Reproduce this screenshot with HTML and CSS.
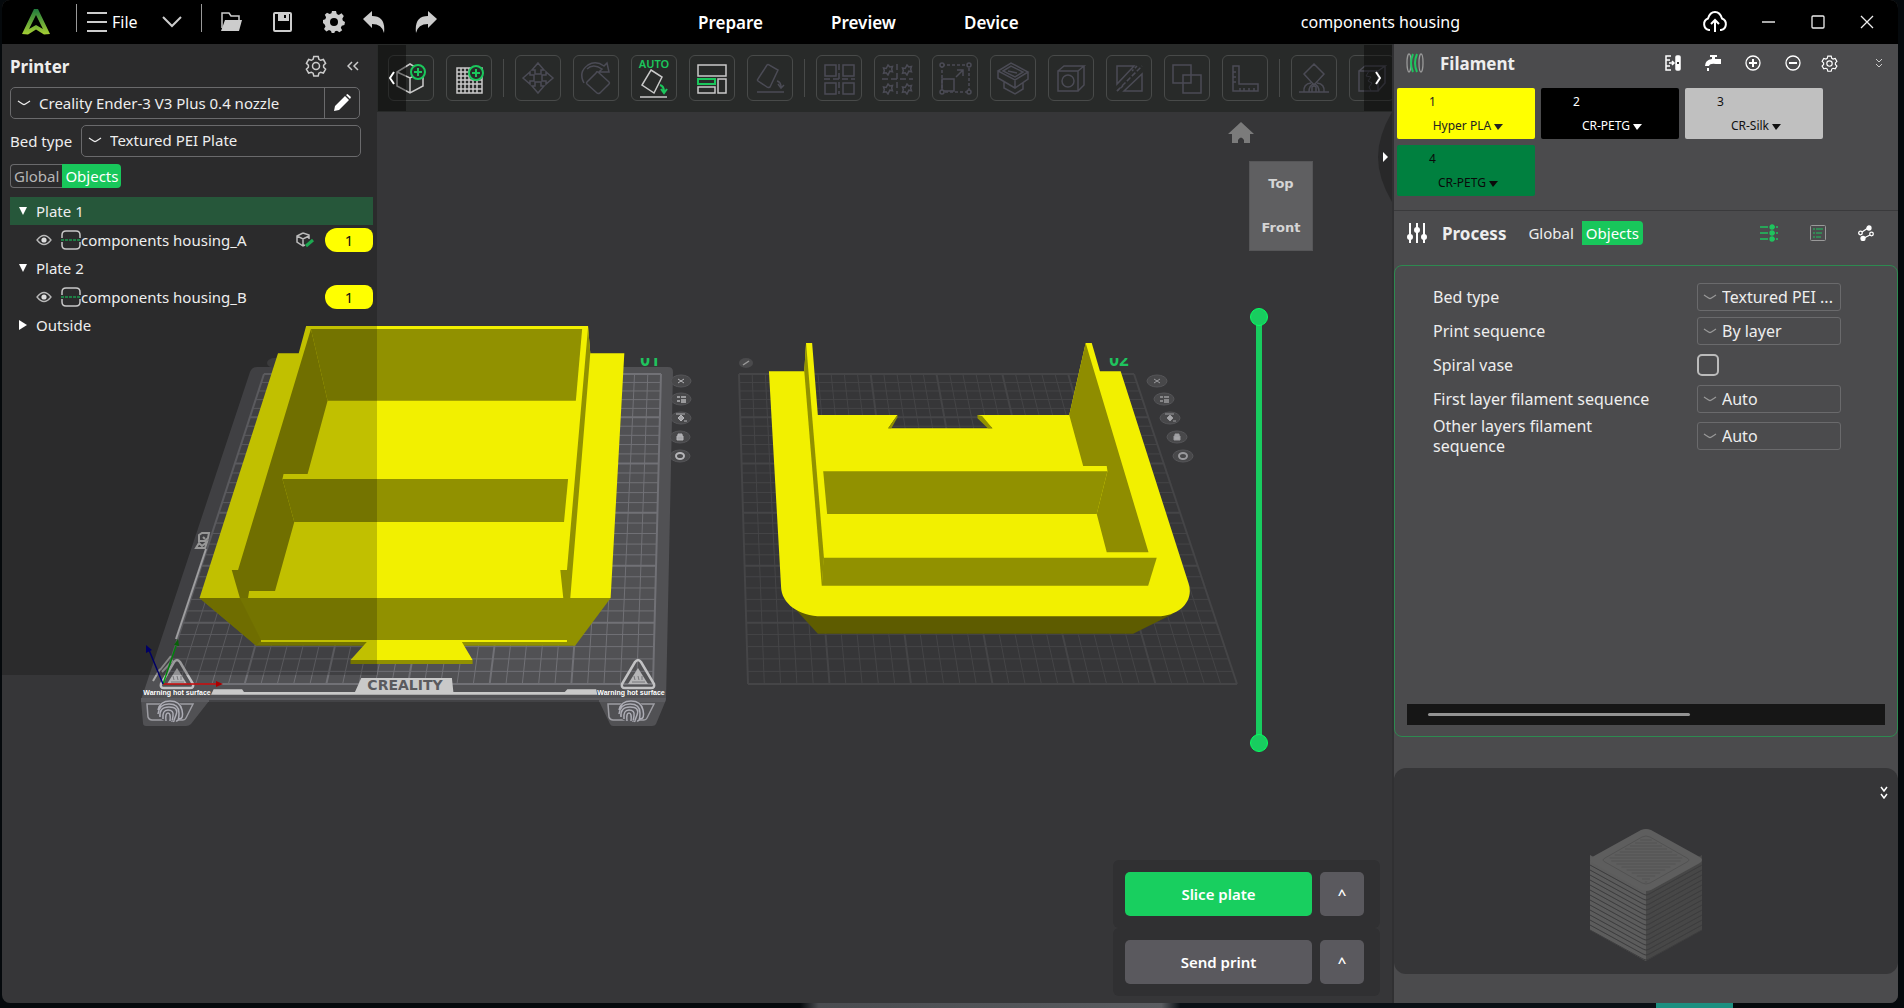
FILE: index.html
```html
<!DOCTYPE html>
<html lang="en">
<head>
    <meta charset="utf-8">
    <title>components housing</title>
    <meta name="viewport" content="width=device-width, initial-scale=1.0">
    <link rel="stylesheet" href="styles.css">
</head>
<body>

<svg class="defs" width="0" height="0">
    <symbol id="gear" viewBox="0 0 22 22">
        <path d="M8.8 1.5h4.4l.7 2.8 1.7 1 2.8-.8 2.2 3.8-2 2v1.9l2 2-2.2 3.8-2.8-.8-1.7 1-.7 2.8H8.8l-.7-2.8-1.7-1-2.8.8-2.2-3.8 2-2v-1.9l-2-2 2.2-3.8 2.8.8 1.7-1z"/>
        <circle cx="11" cy="11" r="3.5"/>
    </symbol>
    <symbol id="down" viewBox="0 0 14 8"><path d="M1 2q5 3.500 6 3.500t6-3.500" fill="none" stroke="currentColor" stroke-width="1.3"/></symbol>
    <symbol id="eye" viewBox="0 0 16 12">
        <path d="M1 6q7-9 14 0q-7 9-14 0z" fill="none" stroke="#b8b8b8" stroke-width="1.3"/><circle cx="8" cy="6" r="2.6" fill="#ddd"/>
    </symbol>
    <symbol id="part" viewBox="0 0 20 20">
        <path d="M1 8V5q0-4 4-4h10q4 0 4 4v3M1 12v3q0 4 4 4h10q4 0 4-4v-3" fill="none" stroke="#c8c8c8" stroke-width="1.5"/>
        <path d="M0 10h20" stroke="#1d9a4e" stroke-width="1.5" stroke-dasharray="3 1"/>
    </symbol>
    <symbol id="minigear" viewBox="-6 -6 12 12"><path d="M0-5l1.800 2 2.700-.5-.8 2.600.8 2.600-2.700-.5L0 5l-1.800-2.300-2.700.5.8-2.600-.8-2.600 2.700.5z"/></symbol>
</svg>

<div class="window">

    <header class="titlebar">
        <div class="tools">
            <svg class="logo" width="28" height="26" viewBox="0 0 28 26">
                <defs><linearGradient id="lg" x1="0" y1="0" x2="0" y2="1"><stop offset="0" stop-color="#1f7a3c"/><stop offset="1" stop-color="#a5cf34"/></linearGradient></defs>
                <path d="M12 0h4l12 25-6 .5-8-5-8 5L0 25zm2 6L7 20l7-4 7 4z" fill="url(#lg)" fill-rule="evenodd"/>
            </svg>
            <span class="bar"></span>
            <button class="file">
                <svg width="22" height="22" viewBox="0 0 22 22" stroke="#ccc" stroke-width="2"><path d="M1 2h20M1 11h20M1 20h20"/></svg>
                File
            </button>
            <button class="drop" aria-label="More"><svg width="20" height="12" viewBox="0 0 20 12" fill="none" stroke="#ccc" stroke-width="2"><path d="M1 1l9 9 9-9"/></svg></button>
            <span class="bar"></span>
            <button aria-label="Open"><svg width="22" height="20" viewBox="0 0 22 20"><path d="M1 16V1h7l2 3h8v4" fill="none" stroke="#ccc" stroke-width="1.5"/><path d="M4 8h17l-3 11H0z" fill="#ccc"/></svg></button>
            <button aria-label="Save"><svg width="20" height="20" viewBox="0 0 20 20"><rect x="1" y="1" width="17" height="18" rx="1" fill="none" stroke="#ccc" stroke-width="2"/><path d="M5 1h11v8H5z" fill="#ccc"/><path d="M12 3v3" stroke="#000" stroke-width="2"/></svg></button>
            <button class="set" aria-label="Settings"><svg width="22" height="22" viewBox="0 0 22 22"><path d="M9 0h4l.8 3 2 .9 2.700-1.600 2.300 2.800-1.500 2.600.6 2L22 11l-.6 3-2.600.7-1 2 1.400 2.500-2.800 2-2.400-1.500-2 .6-.8 2H8.800l-.8-2.400-2-.8L3.400 20.500 1 18l1.500-2.600-.8-2L0 12V9l2.300-.8.8-2L1.800 3.800 4 1.700l2.600 1.400 1.800-.8z" fill="#ccc"/><circle cx="11" cy="11" r="4" fill="#000"/></svg></button>
            <button aria-label="Undo"><svg width="22" height="22" viewBox="0 0 22 22"><path d="M0 8L9 0v5q14 0 12 17q-2-9-12-9v4z" fill="#ccc"/></svg></button>
            <button class="redo" aria-label="Redo"><svg width="22" height="22" viewBox="0 0 22 22"><path d="M22 8L13 0v5q-14 0-12 17q2-9 12-9v4z" fill="#ccc"/></svg></button>
        </div>
        <nav class="tabs">
            <a href="#prepare">Prepare</a>
            <a href="#preview">Preview</a>
            <a href="#device">Device</a>
        </nav>
        <h1 class="project">components housing</h1>
        <div class="controls">
            <button class="cloud" aria-label="Upload"><svg width="26" height="22" viewBox="0 0 26 22" fill="none" stroke="#fff" stroke-width="2"><path d="M8 19H7a6 6 0 0 1-1-11.500Q8 1 13 1t7 6.500A6 6 0 0 1 19 19h-1M13 21V10M9 13l4-4 4 4"/></svg></button>
            <button aria-label="Minimize"><svg width="14" height="14" viewBox="0 0 14 14"><path d="M0 7h13" stroke="#aaa" stroke-width="2"/></svg></button>
            <button aria-label="Maximize"><svg width="14" height="14" viewBox="0 0 14 14"><rect x="1" y="1" width="12" height="12" rx="1" fill="none" stroke="#eee" stroke-width="1.3"/></svg></button>
            <button aria-label="Close"><svg width="14" height="14" viewBox="0 0 14 14"><path d="M1 1l12 12M13 1L1 13" stroke="#eee" stroke-width="1.3"/></svg></button>
        </div>
    </header>

    <div class="main">
        <section class="workspace">

            <svg class="scene" viewBox="2 44 1391 959" preserveAspectRatio="xMinYMin slice">
                <defs>
                    <clipPath id="numClip"><rect x="600" y="358" width="600" height="12"/></clipPath>
                    <g id="warn">
                        <path d="M0-23q3-4 6 0l13 22q1 4-3 4H-10q-4 0-3-4z" fill="none" stroke="#c2c2c4" stroke-width="2.5"/>
                        <path d="M3-17L13-1H-7z" fill="#b5b5b7"/>
                        <path d="M-1-9l1 4M3-9l1 4M7-9l0 4M-3-3h13" stroke="#77777a"/>
                    </g>
                    <g id="finger" fill="none" stroke="#9d9da3">
                        <path d="M-23-7h46l-7 14q-1 2-3 2h-31q-3 0-4-3z" stroke-width="1.5"/>
                        <ellipse rx="13" ry="11" fill="#55555a" stroke="none"/>
                        <g stroke="#adadb5" stroke-width="1.5"><path d="M-12-1q2-9 12-9t12 9-3 9M-12 3q1-10 11-10t10 9-3 8M-10 6q-1-10 9-10t7 8-2 6M-7 8q-1-9 5-9t5 6-1 5M-4 10q-1-8 2-8t2 8"/></g>
                    </g>
                </defs>

                <!-- bed 1 -->
                <path d="M257 367H668q5 0 5 5L666 700 656 724q-1 2-4 2H613q-2 0-3-2L599 701H209L191 724q-2 2-5 2H146q-3 0-3-3L141 700 250 372q2-5 7-5z" fill="#515154"/>
                <path d="M141 698H666L665 702H141z" fill="#5c5c60"/>
                <path d="M209 701H599" stroke="#2a2a2c"/>
                <g id="grid1" fill="none" stroke="#717176"></g>
                <path d="M206 549L176 639" stroke="#c6c6c8" stroke-width="2"/>
                <path d="M199 535l3-2h7l-1 5-3 3h-6zM203 537l2 2M196 548l3-5 3 3 5-4-2 6z" fill="none" stroke="#bdbdbd" stroke-width="2"/>
                <g transform="translate(130 310) scale(.37 .3333)">
                    <path d="M219 1154l7-16h77l5 8h300l17-42h245l4 42h301l7-8h78l3 16z" fill="#c9c9c9"/>
                </g>
                <text class="brand" x="405" y="690">CREALITY</text>
                <use href="#warn" x="174" y="685"/>
                <use href="#warn" x="635" y="685"/>
                <path d="M160 670l11-14M162 672l11-12M153 681l7-12" stroke="#a9a9a9" stroke-width="2"/>
                <text class="warntext" x="177" y="695">Warning hot surface</text>
                <text class="warntext" x="631" y="695">Warning hot surface</text>
                <use href="#finger" x="170" y="711"/>
                <use href="#finger" x="631" y="711"/>

                <ellipse cx="275" cy="363" rx="8" ry="5" fill="#4a4a4c"/>
                <g class="platenum" clip-path="url(#numClip)">
                    <text x="650" y="366">01</text>
                    <text x="1119" y="366">02</text>
                </g>

                <!-- housing A -->
                <g transform="translate(130 310) scale(.37 .3333)">
                    <path fill="#f2f000" d="M400 130H456L476 48H1238L1244 130H1336L1299 864H188z"/>
                    <path fill="#919100" d="M188 864H1299L1203 1007H341z"/>
                    <path fill="#8b8900" d="M188 864H297L354 990 341 1007z"/>
                    <path fill="#919100" d="M489 57H1222L1205 272H534z"/>
                    <path fill="#8d8b00" d="M489 57L534 272 480 492H415L412 507 444 636 392 843H322L319 864H297L275 780H292z"/>
                    <path fill="#919100" d="M412 507H1184L1173 636H444z"/>
                    <path fill="#919100" d="M1238 52L1244 130 1190 864H1171L1163 780H1181z"/>
                    <path fill="#f2f000" d="M354 990H1181V996H354zM640 996H897L926 1050H596z"/>
                    <path fill="#919100" d="M596 1050H926V1062H596z"/>
                </g>

                <!-- axes -->
                <path d="M163 684h56" stroke="#c40000" stroke-width="1.5"/><path d="M216 681l7 3-7 3z" fill="#a00"/>
                <path d="M163 684l13-38" stroke="#00a010" stroke-width="1.5"/><path d="M174 645l4-6 1 7z" fill="#0a7a0a"/>
                <path d="M163 684l-14-34" stroke="#000080" stroke-width="1.5"/><path d="M146 653l0-8 6 5z" fill="#000080"/>

                <!-- bed 2 -->
                <g id="grid2" fill="none" stroke="#454547"></g>
                <ellipse cx="746" cy="363" rx="7" ry="5" fill="#4a4a4c"/><path d="M743 365l6-4" stroke="#999" stroke-width="1.5"/>

                <!-- housing B -->
                <g transform="translate(720 310) scale(.3571 .3333)">
                    <path fill="#5e5c00" d="M205 890L274 971H1157L1268 912z"/>
                    <path fill="#f2f000" d="M137 184H236L241 99H258L274 315H497L471 355H763L721 315H978L1024 99H1041L1064 184H1122L1312 820C1328 870 1290 918 1225 919H285C220 918 172 880 171 830z"/>
                    <path fill="#919100" d="M497 315L497 322 480 355H471zM721 315L734 318 763 355H750L721 325z"/>
                    <path fill="#919100" d="M241 99L291 743 285 827 236 184z"/>
                    <path fill="#8f8d00" d="M1024 99L1200 727H1083L1055 612 1085 484 1083 468H1017L978 315z"/>
                    <path fill="#919100" d="M289 484H1085L1055 612H300z"/>
                    <path fill="#919100" d="M290 743H1223L1199 827H285z"/>
                </g>

                <g id="plateIcons"></g>
            </svg>

            <div class="toolbar">
                <button class="scroll left" aria-label="Scroll left"><svg width="6" height="14" viewBox="0 0 6 14" fill="none" stroke="#fff" stroke-width="2"><path d="M5 1L1 7l4 6"/></svg></button>
                <button class="tool on" aria-label="Add model"><svg viewBox="0 0 46 46"><path d="M22 9l13 8v14l-13 7-13-7V17zM9 17l13 6 6-3M22 23v15"/><circle class="g solid" cx="30" cy="17" r="7"/><path class="g" d="M26 17h8M30 13v8"/></svg></button>
                <button class="tool on" aria-label="Add plate"><svg viewBox="0 0 46 46"><path d="M11 13h25v25H11zM15 13v25M19 13v25M23 13v25M27 13v25M31 13v25M11 17h25M11 21h25M11 25h25M11 29h25M11 34h25"/><circle class="g solid" cx="30" cy="18" r="7"/><path class="g" d="M26 18h8M30 14v8"/></svg></button>
                <span class="sep"></span>
                <button class="tool" disabled aria-label="Move"><svg viewBox="0 0 46 46"><path d="M23 8l6 7h-3v4h-6v-4h-3zM23 38l6-7h-3v-4h-6v4h-3zM8 23l7-6v3h4v6h-4v3zM38 23l-7-6v3h-4v6h4v3z"/></svg></button>
                <button class="tool" disabled aria-label="Rotate"><svg viewBox="0 0 46 46"><path d="M25 17l11 10q1 1 0 2l-9 9q-2 1-3 0l-10-9q-1-1 0-2l9-9q1-2 2-1zM11 28Q5 17 15 10q8-5 16 1l3-3 2 9H26l3-3Q20 8 14 14"/></svg></button>
                <button class="tool on" aria-label="Auto orient"><svg viewBox="0 0 46 46"><text class="auto" x="23" y="13">AUTO</text><path d="M20 15l11 7-8 16-12-8zM9 42h27"/><path class="g" d="M29 30q4 1 4 7M30 34l3 4 3-4"/></svg></button>
                <button class="tool on" aria-label="Arrange"><svg viewBox="0 0 46 46"><path d="M9 10h28v11H9zM29 24h8v14h-8zM9 32h17v6H9z"/><path class="g" d="M9 24h17v5H9z"/></svg></button>
                <button class="tool" disabled aria-label="Lay on face"><svg viewBox="0 0 46 46"><path d="M20 10q1-1 2 0l9 5-8 17q-2 1-3 0l-9-6q-1-1 0-2zM10 37h27M30 26q4 1 4 6M31 29l3 4 3-3"/></svg></button>
                <span class="sep"></span>
                <button class="tool" disabled aria-label="Split to objects"><svg viewBox="0 0 46 46"><path d="M9 10h11v11H9zM27 10h11v11H27zM9 28h11v11H9zM27 28h11v11H27z"/><path stroke-dasharray="6 3" d="M23 9v30M8 24h31"/></svg></button>
                <button class="tool" disabled aria-label="Split to parts"><svg viewBox="0 0 46 46"><use href="#minigear" x="8" y="9" width="12" height="12"/><use href="#minigear" x="27" y="9" width="12" height="12"/><use href="#minigear" x="8" y="28" width="12" height="12"/><use href="#minigear" x="27" y="28" width="12" height="12"/><path stroke-dasharray="6 3" d="M23 9v30M8 24h31"/></svg></button>
                <button class="tool" disabled aria-label="Scale"><svg viewBox="0 0 46 46"><path d="M10 24h12v12H10zM24 22l7-7M25 15h6v6"/><path stroke-dasharray="3 2" d="M10 10h27v27H10z"/><g><circle class="solid" cx="10" cy="10" r="2"/><circle class="solid" cx="37" cy="10" r="2"/><circle class="solid" cx="10" cy="37" r="2"/><circle class="solid" cx="37" cy="37" r="2"/></g></svg></button>
                <button class="tool" disabled aria-label="Hollow"><svg viewBox="0 0 46 46"><path d="M8 16l13-8 17 9-13 8zM8 16v7l17 10 13-9v-7M25 25v8M14 27v6l11 6 8-5v-6M13 16l8-5 12 6-8 5zM18 16l9 2"/></svg></button>
                <button class="tool" disabled aria-label="Hole"><svg viewBox="0 0 46 46"><path d="M10 16h20v20H10zM10 16l6-5h20l-6 5M36 11v19l-6 6"/><circle cx="20" cy="26" r="6"/></svg></button>
                <button class="tool" disabled aria-label="Cut"><svg viewBox="0 0 46 46"><path d="M11 11h17L11 29zM36 19v17H18z"/><path stroke-dasharray="5 2" d="M11 36l25-25"/><path stroke-dasharray="3 2" d="M31 11l-5 5M17 31l-6 5"/></svg></button>
                <button class="tool" disabled aria-label="Boolean"><svg viewBox="0 0 46 46"><path d="M9 10h18v18H9zM19 20h18v18H19z"/></svg></button>
                <button class="tool" disabled aria-label="Measure"><svg viewBox="0 0 46 46"><path d="M11 11h6v18h19v7H11zM11 17h3M11 22h3M11 27h3M18 36v-3M22 36v-3M27 36v-3M32 36v-3"/></svg></button>
                <span class="sep"></span>
                <button class="tool" disabled aria-label="Supports"><svg viewBox="0 0 46 46"><path d="M23 9l10 10-10 11-10-11zM8 37h30M13 37q-1-8 7-9M33 37q1-8-7-9M18 37q0-7 5-8 5 1 5 8M21 37v-5q2-2 4 0v5"/></svg></button>
                <button class="tool" disabled aria-label="Seam"><svg viewBox="0 0 46 46"><path d="M10 16h19v20H10zM10 16l6-5h20l-7 5M36 11v17l-7 8"/><path d="M20 16l-3 5 5 1-3 4 4 2-3 4 2 4" stroke-width="1"/></svg></button>
                <button class="scroll right" aria-label="Scroll right"><svg width="6" height="14" viewBox="0 0 6 14" fill="none" stroke="#fff" stroke-width="2"><path d="M1 1l4 6-4 6"/></svg></button>
            </div>

            <aside class="printer">
                <div class="head">
                    <h2>Printer</h2>
                    <button class="cog" aria-label="Printer settings"><svg width="22" height="22" fill="none" stroke="#ccc" stroke-width="1.5"><use href="#gear"/></svg></button>
                    <button aria-label="Collapse"><svg width="12" height="10" viewBox="0 0 12 10" fill="none" stroke="#ccc" stroke-width="1.5"><path d="M5 1L1 5l4 4M11 1L7 5l4 4"/></svg></button>
                </div>
                <div class="field device">
                    <svg width="14" height="8"><use href="#down"/></svg>
                    <select aria-label="Printer"><option>Creality Ender-3 V3 Plus 0.4 nozzle</option></select>
                    <button class="edit" aria-label="Edit printer"><svg width="18" height="18" viewBox="0 0 18 18"><path d="M1 17l1-5L12 2l4 4L6 16zM13 1l1.500-1L18 3l-1 2z" fill="#fff"/></svg></button>
                </div>
                <div class="bedrow">
                    <label for="bed">Bed type</label>
                    <div class="field">
                        <svg width="14" height="8"><use href="#down"/></svg>
                        <select id="bed"><option>Textured PEI Plate</option></select>
                    </div>
                </div>
                <div class="switch framed">
                    <button>Global</button><button class="active">Objects</button>
                </div>
                <ul class="tree">
                    <li class="plate selected"><svg width="8" height="8"><path d="M0 0h8L4 8z" fill="#fff"/></svg>Plate 1</li>
                    <li class="object">
                        <svg width="16" height="12"><use href="#eye"/></svg><svg width="20" height="20"><use href="#part"/></svg><span>components housing_A</span>
                        <svg class="paint" width="20" height="16" viewBox="0 0 20 16" fill="none" stroke="#bbb" stroke-width="1.5"><path d="M7 1l6 2v4M7 1L1 4v6l6 4 2-1M1 4l6 3 6-3M7 7v6"/><path d="M10 14l7-6" stroke="#1da851" stroke-width="3"/></svg>
                        <b class="slot">1</b>
                    </li>
                    <li class="plate"><svg width="8" height="8"><path d="M0 0h8L4 8z" fill="#fff"/></svg>Plate 2</li>
                    <li class="object">
                        <svg width="16" height="12"><use href="#eye"/></svg><svg width="20" height="20"><use href="#part"/></svg><span>components housing_B</span>
                        <b class="slot">1</b>
                    </li>
                    <li class="plate"><svg width="8" height="10"><path d="M0 0l8 5-8 5z" fill="#fff"/></svg>Outside</li>
                </ul>
            </aside>

            <button class="home" aria-label="Home view"><svg width="26" height="22" viewBox="0 0 26 22"><path d="M13 0l13 12h-4v9h-6v-3q-3-5-6 0v3H4v-9H0z" fill="#7b7b7b"/></svg></button>
            <div class="viewcube">
                <span>Top</span>
                <span>Front</span>
            </div>
            <div class="layers">
                <input type="range" aria-label="Top layer" min="0" max="100" value="100">
                <input type="range" aria-label="Bottom layer" min="0" max="100" value="0">
            </div>
            <button class="fold" aria-label="Fold panel"><svg width="14" height="90" viewBox="0 0 14 90"><path d="M14 0Q0 24 0 45t14 45z" fill="#282829"/><path d="M5 40l5 5-5 5z" fill="#fff"/></svg></button>

            <div class="actions">
                <div class="action"><button class="go slice">Slice plate</button><button class="more" aria-label="Slice options">^</button></div>
                <div class="action"><button class="go">Send print</button><button class="more" aria-label="Print options">^</button></div>
            </div>
        </section>

        <aside class="side">
            <div class="filament">
                <div class="head">
                    <svg width="18" height="20" viewBox="0 0 18 20" fill="none" stroke-width="1.3"><ellipse cx="3" cy="10" rx="2" ry="9" stroke="#999"/><path d="M7 1q-4 9 0 18M11 1q-4 9 0 18" stroke="#1fc45e" stroke-width="2"/><ellipse cx="15" cy="10" rx="2" ry="9" stroke="#999"/></svg>
                    <h2>Filament</h2>
                    <button aria-label="Match filaments"><svg width="16" height="16" viewBox="0 0 16 16" fill="none" stroke="#fff" stroke-width="1.5"><path d="M6 1H1v14h5M1 5h4M1 11h4M4 8h5M7 6l2 2-2 2"/><rect x="11" y="1" width="4" height="14" rx="1" fill="#fff"/><path d="M12 8h2" stroke="#333" stroke-width="2"/></svg></button>
                    <button aria-label="Flush"><svg width="16" height="16" viewBox="0 0 16 16" fill="#fff"><path d="M5 0h7v2h-2v2h6v5h-5q-6-1-7 2H0q0-6 7-7V2H5zM2 13h2v3H2z"/></svg></button>
                    <button aria-label="Add filament"><svg width="16" height="16" viewBox="0 0 16 16" fill="none" stroke="#fff" stroke-width="1.3"><circle cx="8" cy="8" r="7"/><path d="M4 8h8M8 4v8" stroke-width="2"/></svg></button>
                    <button aria-label="Remove filament"><svg width="16" height="16" viewBox="0 0 16 16" fill="none" stroke="#fff" stroke-width="1.3"><circle cx="8" cy="8" r="7"/><path d="M4 8h8" stroke-width="2"/></svg></button>
                    <button aria-label="Filament settings"><svg width="17" height="17" fill="none" stroke="#fff" stroke-width="1.5"><use href="#gear"/></svg></button>
                    <button class="last" aria-label="Collapse filaments"><svg width="6" height="10" viewBox="0 0 6 10" fill="none" stroke="#ccc"><path d="M0 1l3 3 3-3M0 6l3 3 3-3"/></svg></button>
                </div>
                <div class="chips">
                    <button class="chip yellow"><i>1</i><span>Hyper PLA <svg width="9" height="6"><path d="M0 0h9L4 6z"/></svg></span></button>
                    <button class="chip black"><i>2</i><span>CR-PETG <svg width="9" height="6"><path d="M0 0h9L4 6z"/></svg></span></button>
                    <button class="chip silver"><i>3</i><span>CR-Silk <svg width="9" height="6"><path d="M0 0h9L4 6z"/></svg></span></button>
                    <button class="chip green"><i>4</i><span>CR-PETG <svg width="9" height="6"><path d="M0 0h9L4 6z"/></svg></span></button>
                </div>
            </div>

            <div class="process">
                <svg width="20" height="20" viewBox="0 0 20 20" stroke="#fff" stroke-width="2" fill="#fff"><path d="M3 0v20M10 0v20M17 0v20"/><circle cx="3" cy="14" r="2"/><circle cx="10" cy="7" r="2"/><circle cx="17" cy="14" r="2"/></svg>
                <h2>Process</h2>
                <div class="switch">
                    <button>Global</button><button class="active">Objects</button>
                </div>
                <div class="modes">
                    <button aria-label="Parameters"><svg width="18" height="18" viewBox="0 0 18 18" fill="#1fc45e" stroke="#1fc45e" stroke-width="1.3"><path d="M0 3h8M10 3h5M16 3h2M0 9h8M10 9h5M16 9h2M0 15h8M10 15h5M16 15h2"/><circle cx="12" cy="3" r="2"/><circle cx="12" cy="9" r="2"/><circle cx="12" cy="15" r="2"/></svg></button>
                    <button aria-label="List"><svg width="16" height="16" viewBox="0 0 16 16" fill="none" stroke="#999"><rect x=".5" y=".5" width="15" height="15" rx="1"/><path d="M3 4h2M6 4h7M3 8h2M6 8h6M3 12h2M6 12h5" stroke="#1fc45e"/></svg></button>
                    <button aria-label="Compare"><svg width="16" height="16" viewBox="0 0 16 16" fill="none" stroke="#fff" stroke-width="1.3"><path d="M4 7l6-4M6 13l6-3"/><circle cx="2.5" cy="8" r="1.8"/><circle cx="11" cy="3" r="2" fill="#fff"/><circle cx="5" cy="13.5" r="2" fill="#fff"/><circle cx="13.5" cy="9" r="1.8"/></svg></button>
                </div>
            </div>

            <form class="settings">
                <div class="row">
                    <label for="pbed">Bed type</label>
                    <div class="field"><svg width="14" height="8"><use href="#down"/></svg><select id="pbed"><option>Textured PEI ...</option></select></div>
                </div>
                <div class="row">
                    <label for="seq">Print sequence</label>
                    <div class="field"><svg width="14" height="8"><use href="#down"/></svg><select id="seq"><option>By layer</option></select></div>
                </div>
                <div class="row">
                    <label for="vase">Spiral vase</label>
                    <input type="checkbox" id="vase">
                </div>
                <div class="row">
                    <label for="first">First layer filament sequence</label>
                    <div class="field"><svg width="14" height="8"><use href="#down"/></svg><select id="first"><option>Auto</option></select></div>
                </div>
                <div class="row tall">
                    <label for="other">Other layers filament sequence</label>
                    <div class="field"><svg width="14" height="8"><use href="#down"/></svg><select id="other"><option>Auto</option></select></div>
                </div>
                <div class="hscroll"><span></span></div>
            </form>

            <div class="preview">
                <button aria-label="Collapse preview"><svg width="8" height="13" viewBox="0 0 8 13" fill="none" stroke="#fff" stroke-width="1.5"><path d="M1 1l3 4 3-4M1 8l3 4 3-4"/></svg></button>
                <svg id="stack" width="112" height="132" viewBox="0 0 112 132"></svg>
            </div>
        </aside>
    </div>
</div>

<script src="script.js"></script>
</body>
</html>
```
FILE: script.js
```js
// bed grid seen in perspective, 30 cells each way
function drawGrid(id, tl, tr, bl, br, minor, major){
    let top=374, bottom=684, n=30, k=1.234;
    let thin="", thick="";
    for(let i=0;i<=n;i++){
        let s=i/n;
        let line="M"+(tl+(tr-tl)*s)+" "+top+"L"+(bl+(br-bl)*s)+" "+bottom;
        let f=s/(s+(1-s)*k);
        let y=top+(bottom-top)*f;
        line+="M"+(tl+(bl-tl)*f)+" "+y+"H"+(tr+(br-tr)*f);
        if(i%5===0) thick+=line; else thin+=line;
    }
    document.getElementById(id).innerHTML=
        '<path d="'+thin+'" stroke-width="'+minor+'"/><path d="'+thick+'" stroke-width="'+major+'"/>';
}
drawGrid("grid1",264,661,163,653,1,2);
drawGrid("grid2",739,1134,748,1237,1,2);

// round buttons beside each plate
let glyphs=[
    '<path d="M-3-2l6 4M3-2l-6 4"/>',
    '<path d="M-4-2h3M-4 2h3M0-2h5M0 1h5M0 3h5" stroke-width="1.5"/>',
    '<path d="M-3 0l3-3 3 3-3 3zM3 3h3M-5-4H4" fill="#a5a5a8"/>',
    '<path d="M-3-1h6v4h-6zM-2-1v-2h4v2" fill="#a5a5a8"/>',
    '<ellipse rx="4" ry="3" stroke-width="2"/>'
];
function plateIcons(xs, color){
    let ys=[381,399,418,437,456];
    return xs.map((x,i)=>'<g transform="translate('+x+' '+ys[i]+')" fill="none" stroke="'+color+'">'+
        '<ellipse rx="10" ry="6" fill="#48484a" stroke="#555558"/>'+glyphs[i]+'</g>').join("");
}
document.getElementById("plateIcons").innerHTML=
    plateIcons([681,681,681,680,680],"#b5b5b8")+plateIcons([1157,1164,1170,1177,1183],"#9a9a9d");

// printed cube, one band for each layer
let s="";
for(let i=14;i>=0;i--){
    let y=i*5;
    s+='<path d="M0 '+(31+y)+'L52 '+(60+y)+'q4 2 4 2V'+(57+y)+'L0 '+(26+y)+'z" fill="#5c5c5c"/>'+
       '<path d="M112 '+(31+y)+'L56 '+(62+y)+'V'+(57+y)+'L112 '+(26+y)+'z" fill="#474747"/>'+
       '<path d="M0 '+(31+y)+'L53 '+(60+y)+'q3 2 6 0L112 '+(31+y)+'" fill="none" stroke="#3d3d3e" stroke-width="1"/>';
}
s+='<path d="M51 1q5-2 10 0l47 26q8 4 0 8L61 61q-5 2-10 0L4 35q-8-4 0-8z" fill="#5e5e5e"/>'+
   '<path d="M52 8q4-2 8 0l37 21q4 2 0 4L60 54q-4 2-8 0L15 33q-4-2 0-4z" fill="none" stroke="#525252"/>';
for(let i=0;i<15;i++){
    let y=11+i*3, w=38-Math.abs(31-y-1)*1.7;
    s+='<path d="M'+(56-w)+' '+y+'H'+(56+w)+'" stroke="#525252"/>';
}
document.getElementById("stack").innerHTML=s;
```
FILE: styles.css
```css
*{
    margin:0;
    padding:0;
    box-sizing:border-box;
}

body{
    height:100vh;
    padding:0 6px 5px 2px;
    background:linear-gradient(to right, #05090c 42%, #4a4c50 43%, #5a5c60 61%, #0a1015 62%, #0a1015 87%, #1c8f80 87%, #1c8f80 91%, #05090c 91%) bottom / 100% 5px no-repeat #05090c;
    font-family:"Noto Sans", sans-serif;
    font-size:15px;
    color:#eee;
    overflow:hidden;
}

button, select, input{
    font:inherit;
    color:inherit;
    background:none;
    border:none;
    appearance:none;
}

button svg{
    display:block;
}

h2{
    font-size:17px;
    font-weight:bold;
}

.defs{
    position:absolute;
}

.window{
    display:flex;
    flex-direction:column;
    height:100%;
    border-radius:8px;
    overflow:hidden;
    background:#363638;
}

/* title bar */
.titlebar{
    display:flex;
    align-items:center;
    height:44px;
    flex:none;
    padding-right:7px;
    background:#000;
    color:#fff;
    font-size:16px;
}

.tools{
    display:flex;
    align-items:center;
    width:696px;
    padding-left:20px;
}

.tools button{
    margin-right:30px;
}

.tools .file{
    display:flex;
    align-items:center;
    gap:4px;
    margin-right:24px;
}

.tools .drop{
    margin-right:19px;
}

.tools .set{
    margin-right:18px;
}

.tools .redo{
    margin-right:0;
}

.bar{
    width:1px;
    height:28px;
    margin-right:19px;
    margin-bottom:8px;
    background:#999;
}

.logo{
    margin-right:26px;
}

.bar + .file{
    margin-left:-10px;
}

.tabs{
    display:flex;
    gap:68px;
    font-size:17px;
}

.tabs a{
    color:#fff;
    font-weight:600;
    text-decoration:none;
}

.project{
    margin-left:auto;
    margin-right:242px;
    font-size:16px;
    font-weight:normal;
}

.controls{
    display:flex;
    align-items:center;
}

.controls button{
    display:flex;
    justify-content:center;
    width:49px;
}

.controls .cloud{
    width:26px;
    margin-right:16px;
}

/* layout */
.main{
    display:flex;
    flex:1;
    min-height:0;
}

.workspace{
    position:relative;
    flex:1;
    min-width:0;
    overflow:hidden;
}

.scene{
    position:absolute;
    width:100%;
    height:100%;
}

.brand{
    font:bold 14px "DejaVu Sans", sans-serif;
    fill:#5a5a5e;
    text-anchor:middle;
}

.warntext{
    font:bold 7px "Liberation Sans", sans-serif;
    fill:#fff;
    text-anchor:middle;
}

.platenum{
    font-size:17px;
    font-weight:bold;
    fill:#1fc45e;
    text-anchor:middle;
}

/* toolbar */
.toolbar{
    position:absolute;
    top:0;
    left:375px;
    right:0;
    display:flex;
    align-items:center;
    gap:12px;
    height:68px;
    padding-left:11px;
    background:#282a29;
    overflow:hidden;
}

.tool{
    flex:none;
    width:46px;
    height:46px;
    border:1px solid #484a49;
    border-radius:6px;
}

.tool svg{
    width:46px;
    height:46px;
    margin:-1px;
    fill:none;
    stroke:#4b4b55;
    stroke-width:1.5;
    overflow:visible;
}

.tool.on svg{
    stroke:#c9c9c9;
}

.tool .g{
    stroke:#1bc75c;
    stroke-width:2;
}

.tool .solid{
    fill:#282a29;
}

.tool .auto{
    font-size:11px;
    font-weight:600;
    fill:#1bc75c;
    stroke:none;
    text-anchor:middle;
}

.sep{
    flex:none;
    width:1px;
    height:38px;
    margin:0 -1px;
    background:#484a49;
}

.scroll{
    position:absolute;
    top:1px;
    width:28px;
    height:66px;
    padding:0 11px;
    background:rgba(0,0,0,.4);
}

.scroll.left{
    left:1px;
}

.scroll.right{
    right:0;
}

/* printer panel */
.printer{
    position:absolute;
    top:0;
    left:0;
    width:375px;
    height:631px;
    padding:10px 4px 0 8px;
    background:rgba(0,0,0,.2);
}

.head{
    display:flex;
    align-items:center;
}

.printer .head{
    height:24px;
    margin-bottom:9px;
    padding-right:14px;
}

.printer .cog{
    margin-left:auto;
    margin-right:20px;
}

.field{
    display:flex;
    align-items:center;
    gap:8px;
    height:32px;
    padding-left:6px;
    padding-bottom:2px;
    border:1px solid #6a6a6c;
    border-radius:5px;
}

.field select{
    flex:1;
    min-width:0;
}

.device{
    margin-right:13px;
    padding-bottom:0;
}

.edit{
    align-self:stretch;
    padding:0 8px;
    border-left:1px solid #6a6a6c;
}

.bedrow{
    display:flex;
    align-items:center;
    gap:9px;
    margin:6px 12px 7px 0;
}

.bedrow .field{
    flex:1;
}

.switch{
    display:flex;
    height:24px;
}

.switch button{
    padding:0 4px;
    line-height:22px;
}

.switch .active{
    background:#18c75b;
    color:#fff;
    border-radius:0 4px 4px 0;
}

.switch.framed button{
    padding:0 3px;
}

.switch.framed button:first-child{
    border:1px solid #6a6a6c;
    border-right:none;
    border-radius:4px 0 0 4px;
    color:#b5b5b5;
}

.tree{
    margin-top:9px;
    list-style:none;
}

.tree li{
    display:flex;
    align-items:center;
    height:28px;
}

.tree .plate{
    gap:9px;
    padding-left:9px;
}

.tree .object{
    height:29px;
    padding-left:26px;
}

.object svg + svg{
    margin-left:9px;
}

.object span{
    flex:1;
}

.paint{
    margin-right:9px;
}

.selected{
    background:#26573a;
}

.slot{
    width:48px;
    height:24px;
    border-radius:12px 8px 8px 12px;
    background:#ff0;
    color:#111;
    font-weight:normal;
    line-height:24px;
    text-align:center;
}

/* things floating over the canvas */
.home{
    position:absolute;
    top:78px;
    right:138px;
}

.viewcube{
    position:absolute;
    top:117px;
    right:79px;
    width:64px;
    border:1px solid #565658;
    background:#5f5f61;
    color:#d5d5d5;
    font:bold 13px "DejaVu Sans", sans-serif;
    text-align:center;
}

.viewcube span{
    display:block;
    line-height:44px;
}

.layers{
    position:absolute;
    top:264px;
    right:124px;
    width:18px;
    height:444px;
}

.layers::before{
    content:"";
    position:absolute;
    top:9px;
    bottom:9px;
    left:6px;
    width:6px;
    background:#18cc5f;
}

.layers input{
    position:absolute;
    width:18px;
    height:100%;
    writing-mode:vertical-lr;
    direction:rtl;
}

.layers input::-webkit-slider-thumb{
    appearance:none;
    width:18px;
    height:18px;
    border:1px solid #06ff62;
    border-radius:50%;
    background:#18cc5f;
}

.fold{
    position:absolute;
    top:68px;
    right:0;
}

.actions{
    position:absolute;
    right:12px;
    bottom:7px;
}

.action{
    display:flex;
    gap:8px;
    padding:12px 16px 12px 12px;
    border-radius:6px;
    background:#303032;
}

.action button{
    height:44px;
    border-radius:5px;
    background:#5a595e;
    color:#fff;
    font-weight:600;
}

.go{
    width:187px;
}

.action .slice{
    background:#18cf5f;
}

.more{
    width:44px;
}

/* right side */
.side{
    display:flex;
    flex-direction:column;
    flex:none;
    width:506px;
    padding-bottom:29px;
    border-left:2px solid #303032;
    background:#4b4b4d;
}

.filament{
    flex:none;
    height:167px;
    border-bottom:1px solid #3a3a3c;
}

.filament .head{
    height:38px;
    padding:0 16px 0 12px;
}

.filament h2{
    flex:1;
    margin-left:16px;
}

.filament .head button{
    margin-left:24px;
}

.filament .head button:nth-last-child(2){
    margin-left:20px;
}

.filament .head .last{
    margin-left:38px;
}

.chips{
    display:flex;
    flex-wrap:wrap;
    gap:6px;
    padding:6px 3px;
}

.chip{
    display:flex;
    flex-direction:column;
    justify-content:space-between;
    align-items:center;
    width:138px;
    height:51px;
    padding:5px 0 5px 4px;
    border-radius:2px;
    font-size:12px;
    line-height:17px;
}

.chip i{
    align-self:flex-start;
    margin-left:28px;
    font-style:normal;
}

.chip svg{
    display:inline;
    fill:currentColor;
}

.yellow{
    background:#ff0;
    color:#222;
}

.black{
    background:#000;
    color:#fff;
}

.silver{
    background:#c0c0c0;
    color:#111;
}

.green{
    background:#00803f;
    color:#0a0a0a;
}

.process{
    display:flex;
    flex:none;
    align-items:center;
    height:44px;
    margin-bottom:10px;
    padding:0 24px 0 13px;
}

.process h2{
    margin:0 18px 0 15px;
}

.process .switch button + button{
    margin-left:4px;
}

.modes{
    display:flex;
    align-items:center;
    gap:32px;
    margin-left:auto;
}

.settings{
    display:flex;
    flex:none;
    flex-direction:column;
    gap:6px;
    height:472px;
    padding:17px 12px 11px;
    border:1px solid #2d8a50;
    border-radius:8px;
    font-size:16px;
}

.row{
    display:flex;
    align-items:center;
    height:28px;
    padding-left:26px;
}

.row label{
    width:264px;
    padding-right:30px;
    line-height:20px;
}

.row.tall{
    height:34px;
}

.row .field{
    width:144px;
    height:28px;
    gap:5px;
    padding:0 0 0 5px;
    border-radius:3px;
    white-space:nowrap;
}

.row .field svg{
    flex:none;
    color:#999;
}

.row input{
    width:22px;
    height:22px;
    border:2px solid #bbb;
    border-radius:5px;
}

.hscroll{
    height:21px;
    margin-top:auto;
    padding:9px 21px;
    background:#161616;
}

.hscroll span{
    display:block;
    width:60%;
    height:3px;
    border-radius:2px;
    background:#939393;
}

.preview{
    flex:1;
    margin-top:31px;
    padding:18px 10px 0;
    border-radius:12px;
    background:#363638;
}

.preview button{
    display:block;
    margin-left:auto;
}

#stack{
    display:block;
    margin:30px auto 0;
}
```
